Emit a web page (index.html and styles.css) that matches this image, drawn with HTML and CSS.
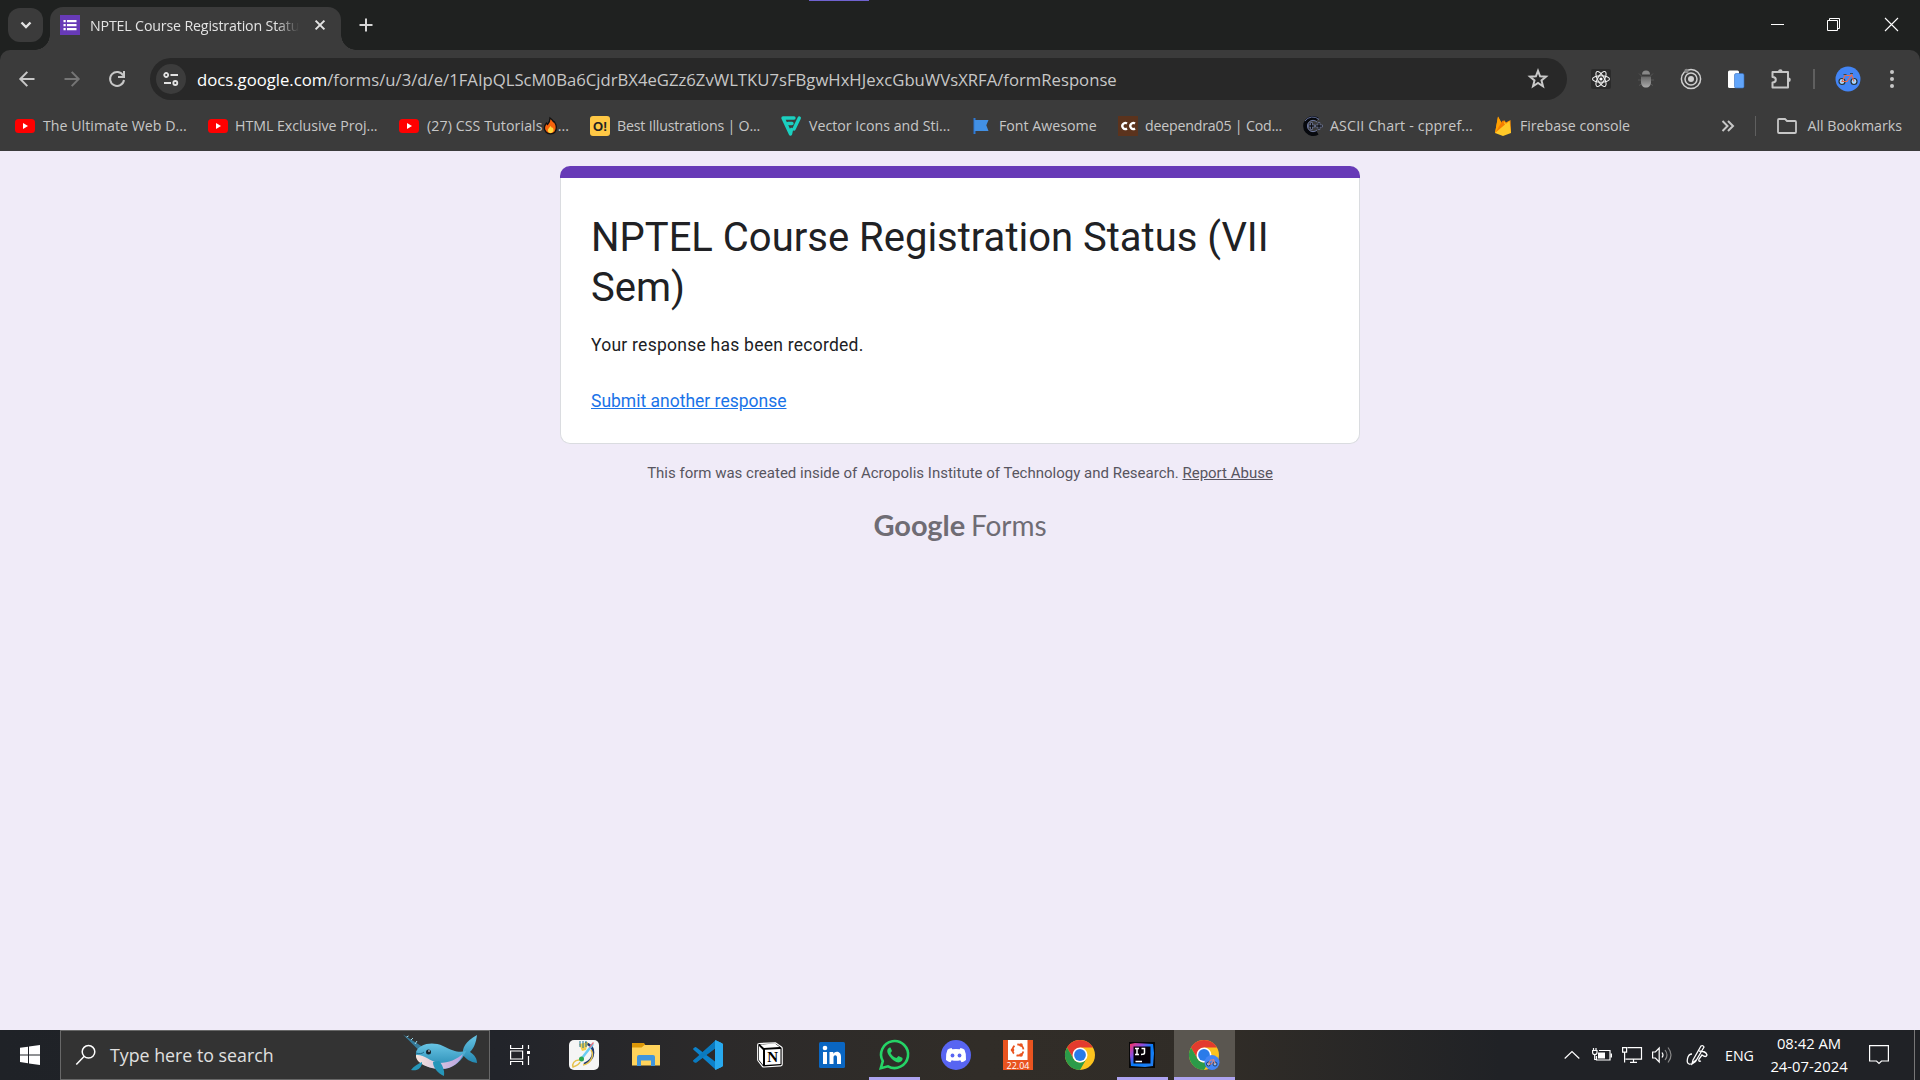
FILE: index.html
```
<!DOCTYPE html>
<html lang="en">
<head>
<meta charset="utf-8">
<title>NPTEL Course Registration Status (VII Sem)</title>
<link rel="stylesheet" href="styles.css">
</head>
<body>
<div class="desktop">
  <div class="recorder-line"></div>
  <header class="tabstrip">
    <button class="tab-search"><svg width="12" height="8" viewBox="0 0 12 8"><path d="M1.500 1.500 6 6l4.500-4.500" fill="none" stroke="#e3e3e3" stroke-width="2.400"/></svg></button>
    <div class="tab">
      <svg class="favicon" width="20" height="20" viewBox="0 0 20 20"><path fill="#673ab7" d="M0 0h20v20H0z"/><path fill="#fff" d="M3.500 5h2.200v2.200H3.500zM7 5h9.500v2.200H7zM3.500 9h2.200v2.200H3.500zM7 9h9.500v2.200H7zM3.500 13h2.200v2.200H3.500zM7 13h9.500v2.200H7z"/></svg>
      <span class="tab-title">NPTEL Course Registration Status</span>
      <svg class="tab-close" width="10" height="10" viewBox="0 0 10 10"><path d="m.6.6 8.800 8.800M9.400.6.6 9.400" stroke="#e3e3e3" stroke-width="2"/></svg>
    </div>
    <svg class="new-tab" width="14" height="14" viewBox="0 0 14 14"><path d="M7 .5v13M.5 7h13" stroke="#d6d6d6" stroke-width="2"/></svg>
    <div class="window-buttons">
      <svg width="13" height="13" viewBox="0 0 13 13"><path d="M0 6.500h13" stroke="#fff"/></svg>
      <svg width="13" height="13" viewBox="0 0 13 13"><path d="M.5 2.500h10v10H.5zM2.500 2.500v-2h10v10h-2" fill="none" stroke="#fff"/></svg>
      <svg width="13" height="13" viewBox="0 0 13 13"><path d="m0 0 13 13M13 0 0 13" stroke="#fff" stroke-width="1.100"/></svg>
    </div>
  </header>

  <div class="chrome-bars">
    <div class="toolbar">
      <svg class="nav-icon" viewBox="0 0 20 20"><path d="M17.500 10H3.500M10.300 2.900 3.300 10l7 7.100" fill="none" stroke="#c7c7c7" stroke-width="2"/></svg>
      <svg class="nav-icon" viewBox="0 0 20 20"><path d="M2.500 10h14M9.700 2.900l7 7.100-7 7.100" fill="none" stroke="#757575" stroke-width="2"/></svg>
      <svg class="nav-icon" viewBox="0 0 20 20"><path d="M16.200 6.500A7 7 0 1 0 17 11" fill="none" stroke="#c7c7c7" stroke-width="2"/><path d="M17 2v6h-6" fill="none" stroke="#c7c7c7" stroke-width="2"/></svg>
      <div class="omnibox">
        <span class="site-info"><svg width="16" height="14" viewBox="0 0 16 14"><g fill="none" stroke="#e3e3e3" stroke-width="1.800"><circle cx="3.200" cy="3" r="2"/><path d="M7.500 3H15M1 11h7"/><circle cx="12.300" cy="11" r="2"/></g></svg></span>
        <span class="url"><b>docs.google.com</b>/forms/u/3/d/e/1FAIpQLScM0Ba6CjdrBX4eGZz6ZvWLTKU7sFBgwHxHJexcGbuWVsXRFA/formResponse</span>
        <svg class="star" width="22" height="22" viewBox="0 0 22 22"><path d="m11 2.800 2.100 5.500 5.900.4-4.500 3.700 1.500 5.900-5-3.300-5 3.300 1.500-5.900L3 8.700l5.900-.4z" fill="none" stroke="#c9c9c9" stroke-width="2"/></svg>
      </div>
      <div class="extensions">
        <span><svg width="20" height="20" viewBox="0 0 20 20"><rect width="20" height="20" rx="2" fill="#2b2b2b"/><g fill="none" stroke="#f0f0f0" stroke-width="1.100"><ellipse cx="10" cy="10" rx="8.500" ry="3.300"/><ellipse cx="10" cy="10" rx="8.500" ry="3.300" transform="rotate(60 10 10)"/><ellipse cx="10" cy="10" rx="8.500" ry="3.300" transform="rotate(120 10 10)"/></g><circle cx="10" cy="10" r="1.600" fill="#fff"/></svg></span>
        <span><svg width="20" height="20" viewBox="0 0 20 20"><path d="M3 4.500 5.500 7M17 4.500 14.500 7M2 11h3M18 11h-3M3 16.500 5.500 15M17 16.500 14.500 15" stroke="#555"/><path d="M6 5.500C6 3 7.500 1.500 10 1.500S14 3 14 5.500z" fill="#888"/><path d="M5 7.500h10v5c0 4-2 6-5 6s-5-2-5-6z" fill="url(#bug)"/><defs><linearGradient id="bug" x2="0" y2="1"><stop stop-color="#666"/><stop offset="1" stop-color="#aaa"/></linearGradient></defs></svg></span>
        <span><svg width="22" height="22" viewBox="0 0 22 22"><g fill="none" stroke="#cfcfcf" stroke-width="1.500"><circle cx="11" cy="11" r="9.600"/><circle cx="11" cy="11" r="6"/></g><circle cx="11" cy="11" r="3" fill="#cfcfcf"/><circle cx="6.500" cy="3" r="2.200" fill="#888"/></svg></span>
        <span><svg width="18" height="20" viewBox="0 0 18 20"><rect x="1" y="1.500" width="11" height="17.500" rx="1.500" fill="#fff"/><rect x="7.500" y="4.500" width="9.500" height="14.500" rx="1.500" fill="#62a5fa" stroke="#386ec1" stroke-width=".6"/></svg></span>
        <span><svg width="22" height="22" viewBox="0 0 22 22"><path d="M2.500 4h15.500v15.500H2.500v-5c2 0 3.300-1 3.300-2.800S4.500 9 2.500 9z" fill="none" stroke="#c7c7c7" stroke-width="2" stroke-linejoin="round"/><path d="M8 3.500a2.300 2.300 0 0 1 4.600 0M18.500 9.500a2.300 2.300 0 0 1 0 4.600z" fill="#c7c7c7"/></svg></span>
      </div>
      <i class="toolbar-rule"></i>
      <svg class="avatar" width="26" height="26" viewBox="0 0 26 26"><circle cx="13" cy="13" r="12.500" fill="#4385f5"/><g fill="#a9d8ff" stroke="#263238" stroke-width="1.200"><circle cx="7" cy="15.500" r="3"/><circle cx="19" cy="15.500" r="3"/></g><path d="m7 15.500 3-6h6l-4 6zM16.500 8l2.500 7.500" fill="none" stroke="#e86c4f" stroke-width="1.100"/><path d="M8.500 8.500h3M15 7.500h3" stroke="#37474f" stroke-width="1.200"/></svg>
      <svg class="menu-dots" width="6" height="20" viewBox="0 0 6 20" fill="#c7c7c7"><circle cx="3" cy="3" r="2"/><circle cx="3" cy="10" r="2"/><circle cx="3" cy="17" r="2"/></svg>
    </div>

    <nav class="bookmarks">
      <a class="bm bm-1"><svg width="20" height="20" viewBox="0 0 20 20"><rect y="3" width="20" height="14" rx="3.500" fill="#f00"/><path d="m8 7 5 3-5 3z" fill="#fff"/></svg><span>The Ultimate Web D...</span></a>
      <a class="bm bm-2"><svg width="20" height="20" viewBox="0 0 20 20"><rect y="3" width="20" height="14" rx="3.500" fill="#f00"/><path d="m8 7 5 3-5 3z" fill="#fff"/></svg><span>HTML Exclusive Proj...</span></a>
      <a class="bm bm-3"><svg width="20" height="20" viewBox="0 0 20 20"><rect y="3" width="20" height="14" rx="3.500" fill="#f00"/><path d="m8 7 5 3-5 3z" fill="#fff"/></svg><span>(27) CSS Tutorials<svg class="flame" width="15" height="18" viewBox="0 0 15 18"><path d="M7 1c3 2 3 4 4.500 4C14 9 14 12 12 15c-2 2.500-7 2.500-9 0-2.500-3-1.500-6.500.5-9l1 1.500C6 6 7 4 7 1z" fill="#f7630c" stroke="#111" stroke-width="1.300"/><path d="M7.500 9c1 1 1 2 2 1.500 2.500 3 0 5.500-2 5.500s-4-2.500-1.500-5z" fill="#ffd83d"/></svg>...</span></a>
      <a class="bm bm-4"><svg width="20" height="20" viewBox="0 0 20 20"><rect width="20" height="20" rx="3" fill="#ffc845"/><text x="10" y="15" class="icon-o" text-anchor="middle">O!</text></svg><span>Best Illustrations | O...</span></a>
      <a class="bm bm-5"><svg width="20" height="20" viewBox="0 0 20 20"><g fill="none" stroke="#1bd0c0" stroke-width="3.400" stroke-linecap="round" stroke-linejoin="round"><path d="M13 2H2l7.500 16 1-4.500"/><path d="M7 7.500h4M18.300 2 13 13"/></g></svg><span>Vector Icons and Sti...</span></a>
      <a class="bm bm-6"><svg width="20" height="20" viewBox="0 0 20 20"><path d="M3.500 2v16" stroke="#2d79d6" stroke-width="2"/><path d="M3.500 4H17.500L15.300 9.300 17.500 15H3.500z" fill="#4290e4"/></svg><span>Font Awesome</span></a>
      <a class="bm bm-7"><svg width="20" height="20" viewBox="0 0 20 20"><path fill="#5b331d" d="M0 0h20v20H0z"/><path d="M9 7.500a3 3 0 1 0 0 5M17 7.500a3 3 0 1 0 0 5" fill="none" stroke="#fff" stroke-width="2.300"/></svg><span>deependra05 | Cod...</span></a>
      <a class="bm bm-8"><svg width="20" height="20" viewBox="0 0 20 20"><path d="M14.500 3.300A8 8 0 1 0 14.500 16.700" fill="none" stroke="#07090e" stroke-width="4"/><path d="M16 3.500A9.300 9.300 0 0 0 2 5M14 6A5.600 5.600 0 1 0 14 14" fill="none" stroke="#7886b8" stroke-width=".8"/><path d="M5 10h7M8.500 6.500v7M12.500 10h7M16 6.500v7" stroke="#8795c8" stroke-width="2.400"/><path d="M5.500 10h6M8.500 7v6M13 10h6M16 7v6" stroke="#111" stroke-width="1.400"/></svg><span>ASCII Chart - cppref...</span></a>
      <a class="bm bm-9"><svg width="20" height="20" viewBox="0 0 20 20"><path d="M2 17 5 .5l4 7L11 4l2 2.500L17.500 4 18 17z" fill="#ff9100"/><path d="m2 17 9-11 2 2 3.500-3L18 17l-8 3z" fill="#ffc928"/><path d="M2 17 5 .5 9 8z" fill="#ffa000"/><path d="m2.500 16.500 7-12 2.500 4z" fill="#f57c00"/></svg><span>Firebase console</span></a>
      <svg class="overflow" width="14" height="12" viewBox="0 0 14 12"><path d="m1.500 1 5 5-5 5M7 1l5 5-5 5" fill="none" stroke="#c7c7c7" stroke-width="2"/></svg>
      <i class="bookmark-rule"></i>
      <svg class="folder" width="20" height="16" viewBox="0 0 20 16"><path d="M1 2.500V14c0 .6.400 1 1 1h16c.6 0 1-.4 1-1V4c0-.6-.4-1-1-1h-8L8 1H2c-.6 0-1 .4-1 1z" fill="none" stroke="#c7c7c7" stroke-width="1.800"/></svg>
      <span class="all-bookmarks">All Bookmarks</span>
    </nav>
  </div>

  <main class="page">
    <section class="card">
      <h1>NPTEL Course Registration Status (VII Sem)</h1>
      <p>Your response has been recorded.</p>
      <a class="again">Submit another response</a>
    </section>
    <p class="notice">This form was created inside of Acropolis Institute of Technology and Research. <u>Report Abuse</u></p>
    <div class="brand"><b>Google</b><span>Forms</span></div>
  </main>

  <footer class="taskbar">
    <div class="start"><svg width="20" height="20" viewBox="0 0 20 20" fill="#fff"><path d="M0 2.800 8 1.700v7.700H0zM9 1.500 20 0v9.400H9zM0 10.400h8v7.800l-8-1.100zM9 10.400h11V20L9 18.400z"/></svg></div>
    <div class="search">
      <svg class="lens" width="22" height="22" viewBox="0 0 22 22"><circle cx="13.500" cy="7.800" r="6.300" fill="none" stroke="#fff" stroke-width="1.500"/><path d="M9 12.500 1.300 20.500" stroke="#fff" stroke-width="1.500"/></svg>
      <span>Type here to search</span>
      <svg class="narwhal" width="76" height="44" viewBox="0 0 76 44">
        <defs><linearGradient id="body" x2="0" y2="1"><stop stop-color="#68c4e4"/><stop offset="1" stop-color="#2387b0"/></linearGradient><linearGradient id="belly" x2="1"><stop stop-color="#f7e5dd"/><stop offset="1" stop-color="#b7a1df"/></linearGradient></defs>
        <path d="m1 1.500 19 12-3 4z" fill="#367b9b"/><path d="m4.500 4 2-1M9 7l2-2M13 11l2-3" stroke="#9cdaec"/>
        <path d="M61 22c-1-7 2-13 14-20-1 8-3 13-7 17 5 3 7 7 7 11-7-1-11-4-14-8z" fill="url(#body)"/>
        <path d="M14 19c3-8 16-11 27-6 10 5 16 7 23 5-3 9-13 19-27 18-13-1-24-8-23-17z" fill="url(#body)"/>
        <path d="M14 22c8-1 13 6 23 8 10 0 18-4 24-9-3 9-12 16-24 15-13-1-24-7-23-14z" fill="url(#belly)"/>
        <path d="M20 29c-4 2-8 4-11 8 5 1 9 0 11-6zM31 29c0 5 4 11 11 14 1-6-2-12-5-15z" fill="#2696b9"/>
        <circle cx="26.500" cy="19" r="2.500" fill="#16232c"/><circle cx="27" cy="18" r=".8" fill="#fff"/><path d="M14 20c3 1 6 1 8-1" fill="none" stroke="#1d6c8c"/>
      </svg>
    </div>
    <div class="task-view"><svg width="20" height="20" viewBox="0 0 20 20" fill="none" stroke="#fff" stroke-width="1.200"><path d="M.6 0v3.500h12V0M.6 20v-3.500h12V20M.6 6h12v8H.6zM18.500 0v4M18.500 11v9"/><path d="M17 6h3v3h-3z" fill="#fff" stroke="none"/></svg></div>
    <div class="apps">
      <div class="app"><svg width="30" height="30" viewBox="0 0 30 30"><rect width="30" height="30" rx="5" fill="#f5f5f5"/><path d="M16 3c11 3 11 16-1 21" fill="none" stroke="#20396f" stroke-width="2.400"/><path d="m10 4 9-2-2 8-4 1z" fill="#f4cf4e"/><path d="M11 1v6M14 1v7M17 1v6" stroke="#1d7594"/><path d="M24 4 13 18" stroke="#6acdf3" stroke-width="2.500"/><path d="m20 7 4-5 1 1-4 5z" fill="#e86d79"/><circle cx="12.500" cy="19" r="2.500" fill="#2aa84f"/><path d="M10 20c-5 0-7 4-6 7 3-1 6-2 7-5M22 10c4 6-1 14-8 15" fill="none" stroke="#e6c24c" stroke-width="1.500"/></svg></div>
      <div class="app"><svg width="28" height="24" viewBox="0 0 28 24"><path d="M0 0h12l2 3v3H0z" fill="#dc9707"/><path d="M0 4.500h9.500l3-2.500H28v20.500H0z" fill="#ffd35b"/><path d="M5 23V14q0-2 2-2h14q2 0 2 2v9h-4v-5.500H9V23z" fill="#4195dc"/></svg></div>
      <div class="app"><svg width="30" height="30" viewBox="0 0 30 30"><path d="M22 1 3.500 17.800 0 20.500l3 2 19-14z" fill="#0872b9"/><path d="M3.500 7.500 22 21.500V29L.3 9.600q-.5-.6 0-1.100l1.200-1.100q1-.7 2 .1z" fill="#0c82cb"/><path d="M.3 20.500 22 1v7.500L3.500 22.400q-1 .8-2 .1L.3 21.600q-.6-.6 0-1.100z" fill="#0a7abf"/><path d="m22 0 7 3.300q1 .5 1 1.600v20.200q0 1.100-1 1.600L22 30q1 0 1-2V2q0-2-1-2z" fill="#2cb3f8"/><path d="M22 0v30l7-3.300q1-.5 1-1.600V4.900q0-1.100-1-1.600z" fill="#28a9ee"/></svg></div>
      <div class="app"><svg width="26" height="26" viewBox="0 0 26 26"><path d="M2 1.500 18.500.8 24.500 5q.7.500.7 1.500v15.800q0 1.500-1.500 1.600L7 25q-1 .1-1.600-.7L1.200 19q-.5-.7-.5-1.500V3q0-1.500 1.300-1.500z" fill="#000" stroke="#fff" stroke-width="1.200"/><path d="m3 2.600 15-1 4.500 3.300L7 6zM2 4l4 4v15l-4-5zM8 7.800l15.500-.9v15.200L8 23z" fill="#fff"/><text x="15.700" y="20" class="icon-n" text-anchor="middle">N</text></svg></div>
      <div class="app"><svg width="26" height="26" viewBox="0 0 26 26"><rect width="26" height="26" rx="1.500" fill="#0a66c2"/><circle cx="6" cy="6" r="2.300" fill="#fff"/><path d="M4 10h4v12H4zM10.500 10h3.800v1.700c1.800-3 7.700-3 7.700 3V22h-4v-6.500c0-3-3.500-3-3.500 0V22h-4z" fill="#fff"/></svg></div>
      <div class="app running"><svg width="30" height="30" viewBox="0 0 30 30"><path d="m1.800 28.200 2-7.100a13.500 13.500 0 1 1 5.200 5.200z" fill="none" stroke="#25d366" stroke-width="2.600"/><path d="M10.500 7.500c-3 1.500-3 5 .2 9 4 5.500 9 7.500 12 4.500 1.200-1.500 1-2.800.5-3.200l-3.700-1.800-2 2c-3-.7-5-3-6-5l1.500-2-1.500-3.500z" fill="#25d366"/></svg></div>
      <div class="app"><svg width="30" height="30" viewBox="0 0 30 30"><circle cx="15" cy="15" r="15" fill="#5865f2"/><path d="M10.500 8q-3 .7-4 1.700-2 4-1.500 10.300 2 1.800 4.500 2.200l1.200-2q4.300 1.300 8.600 0l1.200 2Q23 21.800 25 20q.5-6.300-1.500-10.300-1-1-4-1.700l-.8 1.300q-3.700-.6-7.400 0z" fill="#fff"/><g fill="#5865f2"><ellipse cx="11.500" cy="15.500" rx="1.900" ry="2.100"/><ellipse cx="18.500" cy="15.500" rx="1.900" ry="2.100"/></g></svg></div>
      <div class="app"><svg width="30" height="30" viewBox="0 0 30 30"><path fill="#e95420" d="M0 0h30v30H0z"/><path fill="#fff" d="M5 0h19.500v20H5z"/><circle cx="15" cy="10" r="5.500" fill="none" stroke="#e95420" stroke-width="1.800" stroke-dasharray="8.500 3" stroke-dashoffset="-1.500"/><g fill="#e95420"><circle cx="9.500" cy="10" r="1.800"/><circle cx="18" cy="5" r="1.800"/><circle cx="18" cy="15" r="1.800"/></g><text x="15" y="28.700" class="icon-ver" text-anchor="middle">22.04</text></svg></div>
      <div class="app"><svg width="30" height="30" viewBox="0 0 30 30"><g id="chrome-mark"><circle cx="15" cy="15" r="15" fill="#fcc31e"/><path d="M2 7.500A15 15 0 0 1 28 7.500H15L8.500 18.750z" fill="#e33b2e"/><path d="M2 7.500 8.500 18.750A7.500 7.500 0 0 0 21.500 18.750L15 30A15 15 0 0 1 2 7.500z" fill="#2b9b49"/><circle cx="15" cy="15" r="7.500" fill="#fff"/><circle cx="15" cy="15" r="5.900" fill="#2a7be9"/></g></svg></div>
      <div class="app running"><svg width="26" height="26" viewBox="0 0 26 26"><defs><linearGradient id="ij" x2="1" y2="1"><stop stop-color="#fe315d"/><stop offset=".3" stop-color="#8d4de0"/><stop offset=".5" stop-color="#087cfa"/><stop offset="1" stop-color="#267ff0"/></linearGradient></defs><path fill="#080808" d="M0 0h26v26H0z"/><path d="M1 2 6 1l18 1 1 9-1 13-8 1-14-1-1-10z" fill="url(#ij)"/><path d="M4.500 4.500h17v17h-17z" fill="#080008"/><path d="M6 6.500h4M8 6.500v6M6 12.500h4M12.500 6.500h3v4.500q0 1.500-3.500 1.500M6.500 19.500H13" fill="none" stroke="#fff" stroke-width="1.500"/></svg></div>
      <div class="app running active"><svg width="31" height="30" viewBox="0 0 31 30"><use href="#chrome-mark"/><circle cx="23" cy="22.500" r="7.500" fill="#4385f5"/><g fill="#8dbdf5" stroke="#263c60"><circle cx="19.500" cy="24" r="2"/><circle cx="26" cy="24" r="2"/></g><path d="m19.500 24 2-4h3l-2 4zM24.500 19l1.500 5" fill="none" stroke="#e68472"/></svg></div>
    </div>
    <div class="tray">
      <svg width="16" height="10" viewBox="0 0 16 10"><path d="m.7 8.500 7.300-7 7.300 7" fill="none" stroke="#fff" stroke-width="1.200"/></svg>
      <svg class="battery" width="20" height="16" viewBox="0 0 20 16"><path d="M7 3.500h11v9.500H4.500V9M19.400 6.500v4M1.500 1v2M4 1v2M.6 3.500h4.400v2q0 2-2.200 2t-2.200-2zM2.700 7.500v5h2" fill="none" stroke="#fff" stroke-width="1.200"/><path d="M6 5.500h7v6H6z" fill="#fff"/></svg>
      <svg width="20" height="16" viewBox="0 0 20 16"><path d="M5.500.6h14v11.500H3.500M8 15.400h7M11.500 12v3M.6.6h4v4.500h-4zM2.600 5v10.500" fill="none" stroke="#fff" stroke-width="1.200"/></svg>
      <svg width="20" height="18" viewBox="0 0 20 18"><path d="M.6 6h2.800l3.800-4v14l-3.800-4H.6z" fill="none" stroke="#fff" stroke-width="1.200"/><path d="M10 6.500q2 2.500 0 5" fill="none" stroke="#fff" stroke-width="1.200"/><path d="M13 4q4 5 0 10M16 1.500q6 7.500 0 15" fill="none" stroke="#888" stroke-width="1.200"/></svg>
      <svg class="pen" width="22" height="21" viewBox="0 0 22 21"><path d="M6 9C1 9 0 18 3 19s5-2 7-4M7 15 15 1q2-1 3 1L9.500 16.500 6 19zM13 6q7 0 8 4-1 3-5 0l-3 4q-1 3 2 2" fill="none" stroke="#fff" stroke-width="1.300"/></svg>
      <span class="lang">ENG</span>
      <div class="clock"><span>08:42 AM</span><span>24-07-2024</span></div>
      <svg class="note" width="20" height="20" viewBox="0 0 20 20"><path d="M.6.6h18.800v15.400H12.500L10 18.500 7.500 16H.6z" fill="none" stroke="#fff" stroke-width="1.200"/></svg>
      <i class="peek"></i>
    </div>
  </footer>
</div>
</body>
</html>
```
FILE: styles.css
```
* { box-sizing: border-box; }
body { margin: 0; font-family: "Open Sans", "Noto Sans", sans-serif; }
svg { display: block; flex: none; overflow: visible; }
.desktop { position: relative; width: 1920px; height: 1080px; display: flex; flex-direction: column; overflow: hidden; background: #1f2120; }
.recorder-line { position: absolute; left: 809px; top: 0; width: 60px; height: 1px; background: #6f62cf; }

.tabstrip { height: 50px; display: flex; align-items: flex-start; padding: 7px 22px 0 8px; }
.tab-search { width: 35px; height: 34px; margin: 1px 7px 0 0; padding: 0; border: 0; border-radius: 12px; background: #3b3b3b; display: grid; place-items: center; }
.tab { position: relative; width: 291px; height: 43px; padding: 8px 16px 0 10px; display: flex; align-items: flex-start; background: #3b3b3b; border-radius: 13px 13px 0 0; }
.tab::before, .tab::after { content: ""; position: absolute; bottom: 0; width: 15px; height: 15px; }
.tab::before { right: 100%; background: radial-gradient(circle at 0 0, transparent 14.5px, #3b3b3b 15px); }
.tab::after { left: 100%; background: radial-gradient(circle at 100% 0, transparent 14.5px, #3b3b3b 15px); }
.tab-title { width: 209px; margin-left: 10px; padding-top: 1px; overflow: hidden; white-space: nowrap; font-size: 14.2px; letter-spacing: -.15px; line-height: 20px; color: #e3e3e3; -webkit-mask-image: linear-gradient(90deg, #000 186px, transparent 209px); mask-image: linear-gradient(90deg, #000 186px, transparent 209px); }
.tab-close { margin: 5px 0 0 16px; }
.new-tab { margin: 11px 0 0 18px; }
.window-buttons { width: 127px; margin: 11px 0 0 auto; display: flex; justify-content: space-between; }
.window-buttons svg:nth-child(2) { margin-left: -2px; }

.chrome-bars { height: 101px; background: #3b3b3b; border-radius: 10px 10px 0 0; }
.toolbar { height: 50px; padding: 8px 0 0 17px; display: flex; align-items: center; }
.nav-icon { width: 20px; height: 20px; margin-right: 25px; }
.omnibox { width: 1417px; height: 42px; margin-left: -2px; padding: 0 18px 0 6px; display: flex; align-items: center; border-radius: 21px; background: #282828; }
.site-info { width: 30px; height: 30px; border-radius: 50%; background: #3c3c3c; display: grid; place-items: center; }
.url { flex: 1; margin-left: 11px; font-size: 16.7px; color: #c7c7c7; white-space: nowrap; }
.url b { font-weight: 400; color: #fff; }
.extensions { display: flex; margin-left: 11px; }
.extensions span { width: 45px; height: 24px; display: grid; place-items: center; }
.toolbar-rule { width: 2px; height: 20px; margin-left: 10px; background: #5f5f5f; }
.avatar { margin-left: 20px; }
.menu-dots { margin-left: 28px; }

.bookmarks { height: 51px; display: flex; align-items: center; padding: 0 18px 0 15px; font-size: 14.2px; color: #c7c7c7; white-space: nowrap; }
.bm { display: flex; align-items: center; gap: 7px; height: 24px; flex: none; }
.bm span { display: flex; align-items: center; }
.bm-1 { width: 193px; gap: 8px; letter-spacing: .02px; }
.bm-2 { width: 191px; letter-spacing: -.03px; }
.bm-3 { width: 191px; gap: 8px; letter-spacing: .08px; }
.bm-4 { width: 191px; letter-spacing: -.2px; }
.bm-5 { width: 190px; gap: 8px; }
.bm-6 { width: 147px; gap: 8px; }
.bm-7 { width: 185px; letter-spacing: -.2px; }
.bm-8 { width: 190px; letter-spacing: .15px; }
.bm-9 { width: 228px; letter-spacing: -.03px; }
.icon-o { font: 700 13px "Liberation Sans", sans-serif; fill: #222; }
.bookmark-rule { width: 3px; height: 20px; margin-left: 20px; background: #5f5f5f; }
.folder { margin-left: 21px; }
.all-bookmarks { margin-left: 10px; }

.page { height: 879px; padding-top: 15px; display: flex; flex-direction: column; align-items: center; background: #f0ebf8; font-family: Roboto, sans-serif; }
.card { position: relative; width: 800px; height: 278px; padding: 47px 30px 0; border: 1px solid #dadce0; border-top: 0; border-radius: 10px; background: #fff; color: #202124; }
.card::before { content: ""; position: absolute; top: 0; left: -1px; right: -1px; height: 12px; border-radius: 10px 10px 0 0; background: #673ab7; }
.card h1 { margin: 0; font-size: 40px; line-height: 50px; font-weight: 400; }
.card p { margin: 20px 0 0; font-size: 17.5px; line-height: 25px; letter-spacing: .25px; }
.again { display: inline-block; margin-top: 31px; font-size: 17.5px; line-height: 25px; color: #1a73e8; text-decoration: underline; }
.notice { margin: 18px 0 0; font-size: 15px; line-height: 22px; color: #575560; white-space: nowrap; }
.brand { height: 36px; margin-top: 23px; display: flex; align-items: baseline; gap: 6px; font-family: Lato, sans-serif; color: #6f6c74; line-height: 36px; }
.brand b { font-size: 29px; font-weight: 700; letter-spacing: -.1px; }
.brand span { font-size: 28px; letter-spacing: -.1px; }

.taskbar { height: 50px; display: flex; align-items: stretch; background: linear-gradient(90deg, #1f2227, #22242a 500px, #2c2a2a 720px, #312d28 980px, #302c27 1230px, #202226 1500px); color: #fff; }
.start { width: 60px; display: grid; place-items: center; }
.search { width: 430px; display: flex; align-items: center; padding: 0 11px 0 14px; border: 1px solid #686868; background: #333; font-size: 17.8px; color: #e0e0e0; white-space: nowrap; }
.search span { margin-left: 13px; }
.narwhal { margin-left: auto; }
.task-view { width: 60px; display: grid; place-items: center; }
.apps { display: flex; gap: 1px; margin-left: 4px; }
.app { position: relative; width: 61px; padding-right: 2px; display: grid; place-items: center; }
.running::after { content: ""; position: absolute; left: 5px; right: 5px; bottom: 0; height: 3px; background: #ada3f0; }
.active { padding-right: 0; background: #5a5650; }
.active::after { left: 0; right: 0; }
.icon-n { font: 700 15px "Liberation Serif", serif; fill: #000; }
.icon-ver { font: 9px "Open Sans", sans-serif; fill: #fff; }
.tray { margin-left: auto; display: flex; align-items: center; gap: 10px; width: 356px; white-space: nowrap; }
.battery { margin-left: 2px; }
.tray .pen { margin-left: 4px; }
.lang { margin-left: 7px; width: 29px; font-size: 14.2px; }
.clock { margin-left: 4px; width: 82px; display: flex; flex-direction: column; align-items: center; font-size: 14.8px; line-height: 23px; }
.note { margin-left: 9px; }
.peek { width: 1px; height: 50px; margin-left: 15px; background: #777; }
```
